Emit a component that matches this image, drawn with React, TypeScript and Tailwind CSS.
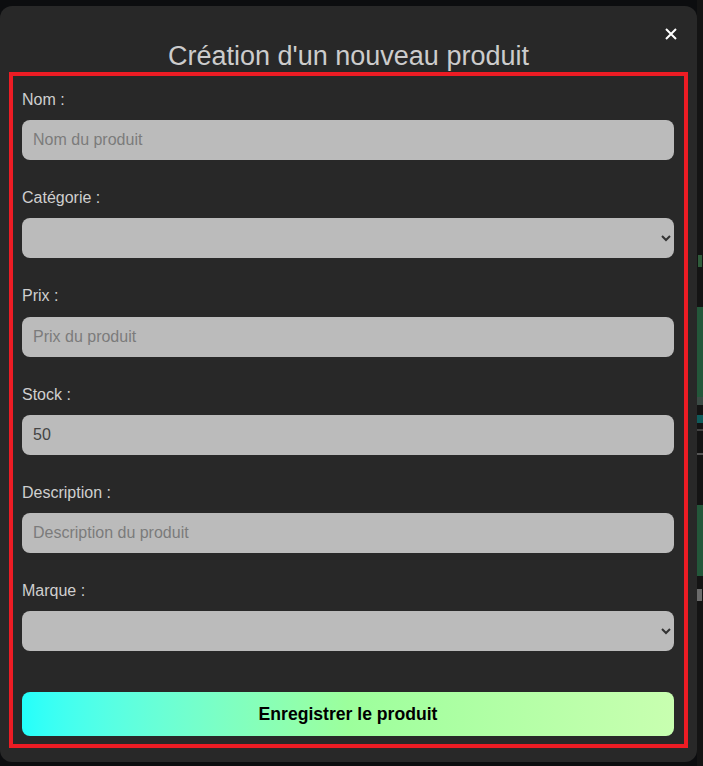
import { useState } from 'react';

const fields = [
  { id: 'nom', label: 'Nom :', type: 'text', placeholder: 'Nom du produit' },
  { id: 'categorie', label: 'Catégorie :', type: 'select' },
  { id: 'prix', label: 'Prix :', type: 'text', placeholder: 'Prix du produit' },
  { id: 'stock', label: 'Stock :', type: 'text', value: '50' },
  { id: 'description', label: 'Description :', type: 'text', placeholder: 'Description du produit' },
  { id: 'marque', label: 'Marque :', type: 'select' },
];

export default function App() {
  const [stock, setStock] = useState('50');

  return (
    <div className="flex h-[766px] w-full overflow-hidden bg-[#0c0d0f] font-['Liberation_Sans',Arial,sans-serif]">
      {/* Modal */}
      <div className="relative mt-[6px] h-[756px] w-[697px] shrink-0 rounded-[12px] bg-[#282828] px-[9px] pt-[35px]">
        <button className="absolute right-[20px] top-[22px] flex h-[12px] w-[12px] items-center justify-center">
          <svg width="12" height="12" viewBox="0 0 12 12">
            <path d="M1 1L11 11M11 1L1 11" stroke="#ffffff" strokeWidth="2" />
          </svg>
        </button>

        <h1 className="text-center text-[27px] leading-[31px] text-[#cccccc]">Création d'un nouveau produit</h1>

        <form className="border-4 border-[#ed1c24] pb-[8px] pl-[9px] pr-[10px] pt-[15px]">
          {fields.map((f) => (
            <div key={f.id} className="mb-[29px]">
              <label htmlFor={f.id} className="mb-[11px] block text-[16px] leading-[18.2px] text-[#cfcfcf]">
                {f.label}
              </label>
              {f.type === 'select' ? (
                <select
                  id={f.id}
                  className="block h-[40px] w-full rounded-[8px] border-0 bg-[#bbbbbb] px-[8px] text-[16px] text-[#333333] outline-none"
                >
                  <option value=""></option>
                </select>
              ) : (
                <input
                  id={f.id}
                  type="text"
                  placeholder={f.placeholder}
                  value={f.id === 'stock' ? stock : undefined}
                  onChange={f.id === 'stock' ? (e) => setStock(e.target.value) : undefined}
                  className="block h-[40px] w-full rounded-[8px] border-0 bg-[#bbbbbb] px-[11px] text-[16px] text-[#444444] outline-none placeholder:text-[#7b7b7b]"
                />
              )}
            </div>
          ))}

          {/* margin collapses with the last field's mb-[29px] */}
          <button
            type="button"
            className="mt-[41px] block h-[44px] w-full rounded-[8px] bg-linear-to-r from-[#22fffb] via-[#9cff9c] to-[#c8ffb0] text-[17.6px] font-bold text-black"
          >
            Enregistrer le produit
          </button>
        </form>
      </div>

      {/* Page behind the modal */}
      <div className="flex w-[6px] shrink-0 flex-col bg-[#141414] pt-[255px]">
        <div className="ml-[1px] h-[12px] w-[4px] bg-[#2f5c3b]" />
        <div className="h-[40px]" />
        <div className="h-[90px] bg-[#23573a]" />
        <div className="h-[8px] bg-[#3b4b45]" />
        <div className="h-[10px]" />
        <div className="h-[8px] bg-[#0f5b5b]" />
        <div className="mt-[6px] h-[2px] bg-[#444444]" />
        <div className="mt-[22px] h-[2px] bg-[#555555]" />
        <div className="h-[50px]" />
        <div className="h-[71px] bg-[#23573a]" />
        <div className="mt-[13px] h-[12px] w-[5px] bg-[#6b6b6b]" />
      </div>
    </div>
  );
}
